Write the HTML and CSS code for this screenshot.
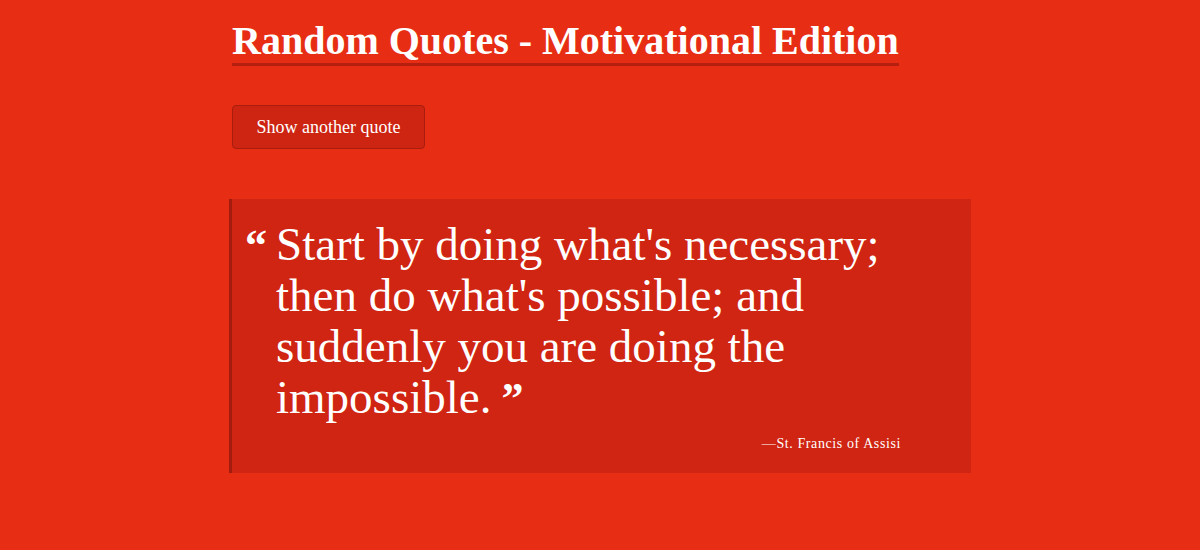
FILE: index.html
```html
<!DOCTYPE html>
<html lang="en">
<head>
<meta charset="utf-8">
<title>Random Quotes - Motivational Edition</title>
<link rel="stylesheet" href="styles.css">
</head>
<body>
<main class="page">
  <h1 class="title">Random Quotes - Motivational Edition</h1>
  <div class="actions">
    <button class="btn" type="button">Show another quote</button>
  </div>
  <blockquote class="quote">
    <p class="quote-text"><span class="mark open">&ldquo;</span>Start by doing what's necessary; then do what's possible; and suddenly you are doing the impossible.<span class="mark close">&rdquo;</span></p>
    <footer class="author">&mdash;St. Francis of Assisi</footer>
  </blockquote>
</main>
</body>
</html>
```
FILE: styles.css
```css
html, body {
  margin: 0;
  padding: 0;
  background: #e72e14;
  color: #fff;
  font-family: "Liberation Serif", "DejaVu Serif", serif;
}
.page {
  width: 742px;
  margin: 0 auto;
  padding-top: 19px;
}
.title {
  display: inline-block;
  margin: 0 0 0 3px;
  font-size: 40px;
  font-weight: 700;
  line-height: 44px;
  border-bottom: 3px solid #b41f0f;
  padding-bottom: 0;
}
.actions {
  margin-top: 39px;
  padding-left: 3px;
}
.btn {
  font-family: inherit;
  font-size: 18px;
  color: #fff;
  background: #cd2512;
  border: 1px solid #a91d0e;
  border-radius: 4px;
  width: 193px;
  height: 44px;
  padding: 0;
  cursor: pointer;
}
.quote {
  margin: 50px 0 0 0;
  background: #cf2512;
  border-left: 3px solid #a31c0e;
  padding: 20px 70px 21px 44px;
}
.quote-text {
  margin: 0;
  font-size: 47px;
  line-height: 51px;
}
.mark {
  font-weight: 700;
  font-size: 44px;
  line-height: 1;
}
.open {
  margin-left: -31px;
  margin-right: 9px;
}
.close {
  margin-left: 10px;
}
.author {
  text-align: right;
  font-size: 14px;
  line-height: 17px;
  letter-spacing: 0.6px;
  margin-top: 12px;
}
```
